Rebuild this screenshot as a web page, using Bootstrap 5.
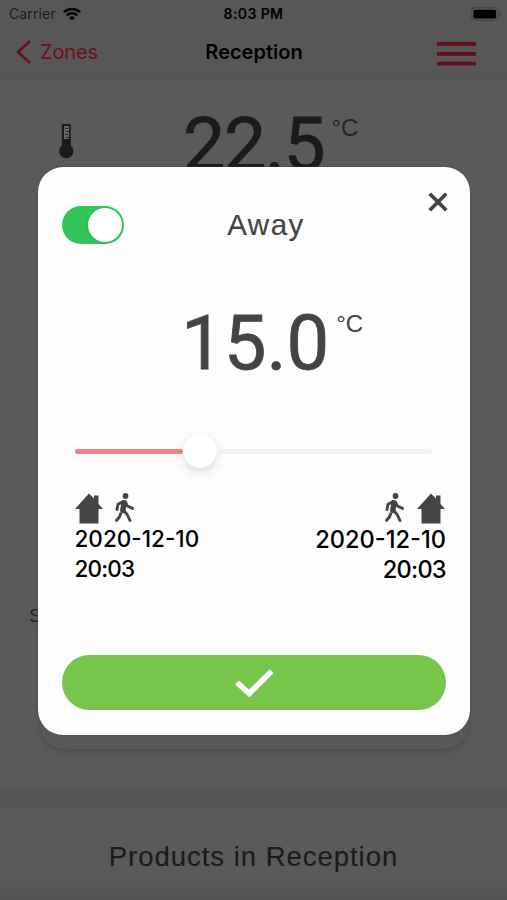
<!DOCTYPE html>
<html lang="en">
<head>
<meta charset="utf-8">
<meta name="viewport" content="width=device-width, initial-scale=1">
<title>Reception</title>
<link href="https://cdn.jsdelivr.net/npm/bootstrap@5.3.0/dist/css/bootstrap.min.css" rel="stylesheet">
<style>
body{background:#5a5a5a;font-family:Inter,"Liberation Sans",sans-serif;color:#000;height:900px;overflow:hidden}
svg{display:block;flex:none}
.screen{height:900px}
.topbar{height:79px;background:#575757;border-bottom:1px solid #4f4f4f}
.status{height:28px;padding:0 5px 0 9px;font-size:14px;line-height:28px}
.status>*,.titles>*{flex:1 1 0}
.carrier{color:#1b1b1b;letter-spacing:.1px;gap:7px}
.clock{font-weight:600;font-size:14px;letter-spacing:.4px;margin-left:-4px}
.titles{height:50px;padding:0 31px 2px 16px;font-size:20px}
.back{color:#6b0f1e;gap:9px;text-decoration:none;letter-spacing:-.15px}
.page-title{font-weight:600;font-size:20px;letter-spacing:0;position:relative;left:8px}
.uni{font-family:"Liberation Sans",Arial,sans-serif}
.reading{height:639px;padding:32px 0 0 58px}
.thermo{margin-top:13px}
.big{font-family:Roboto,"Liberation Sans",sans-serif;font-size:75px;line-height:63px;color:#1b1b1b;letter-spacing:-1.2px;-webkit-text-stroke:.8px currentColor}
.deg{font-size:24px;line-height:28px;color:#242424}
.past{margin:2px 0 0 109px}
.reading .deg{margin:3px 0 0 7px}
.tail{height:79px}
.band{height:20px;background:#565656;margin-top:70px}
.section-title{font-size:27.5px;color:#1b1b1b;letter-spacing:.97px;line-height:36px;padding-top:31px;-webkit-text-stroke:.15px currentColor}
.bottom-shade{position:absolute;left:0;right:0;bottom:0;height:24px;background:linear-gradient(#5a5a5a,#535353)}
.under-card{position:absolute;left:40px;top:600px;width:429px;height:149px;border-radius:25px;background:#585858;box-shadow:0 3px 4px #4e4e4e}
.hint{position:absolute;left:29px;top:604px;font-size:19px;line-height:24px;color:#242424}
.sheet{position:absolute;left:38px;top:167px;width:432px;height:568px;border-radius:25px;background:#fdfdfd;padding:0 24px;box-shadow:0 0 2px #444}
.head{height:96px;padding-top:21px}
.toggle{width:62px;height:38px;border-radius:19px;background:#32c55a;padding:2px;margin-top:18px}
.knob{width:34px;height:34px;border-radius:50%;background:#fff;box-shadow:-1px 1px 3px #0b913340}
.mode{font-size:29.5px;line-height:36px;color:#444;letter-spacing:1.5px;padding-top:19px;margin-right:19px;-webkit-text-stroke:.15px currentColor}
.x-btn{border:0;background:none;padding:3px 0 0;margin-right:-3px}
.value{padding:48px 0 0 119px}
.value .big{color:#444;font-size:76px;letter-spacing:0;margin:1px 0 -1px}
.value .deg{color:#444;margin:-1px 0 0 7px}
.slide{height:34px;margin:60px 14px 0 13px}
.bar{height:5px;border-radius:3px}
.done{width:108px;background:#f28089}
.thumb{width:34px;height:34px;border-radius:50%;background:#fff;box-shadow:0 4px 9px #0002,0 0 1px #0001}
.rest{flex:1;background:#f1f1f1}
.dates{height:119px;padding:25px 0 0 12.5px}
.when{font-size:22.5px;line-height:29.5px;font-weight:500}
.when.r{font-size:23.6px;line-height:30px}
.hour{letter-spacing:-.8px}
.r .hour{margin-right:.2px}
.marks{gap:11px}
.r .marks{gap:13px;margin-right:1px;margin-bottom:1px}
.ok{height:55px;border-radius:28px;background:#78c54b;border:0;margin-top:68px}
</style>
</head>
<body>
<svg width="0" height="0" class="position-absolute"><defs>
<symbol id="house" viewBox="0 0 28 30"><path fill="#444" d="M14 0 19 5V2H23.5V10.5L28 15.5H23.5V30H4.5V15.5H0Z"/></symbol>
<symbol id="walk" viewBox="0 0 20 30"><circle cx="11.5" cy="3" r="2.9" fill="#444"/><path d="M10 10 8.8 17.5" stroke="#444" stroke-width="5.4" stroke-linecap="round"/><path d="M9.5 8.4 4 11.2 3 16.5M11.5 9 13.4 13 18.5 15.4M9.5 17.5 13.2 21.5 16 27.5" fill="none" stroke="#444" stroke-width="2.9" stroke-linecap="round" stroke-linejoin="round"/><path d="M6.7 20.8 5.4 24 2.6 27.3" fill="none" stroke="#444" stroke-width="3" stroke-linecap="round"/></symbol>
</defs></svg>
<div class="screen position-relative">
  <header class="topbar">
    <div class="status d-flex align-items-center">
      <div class="carrier d-flex align-items-center"><span>Carrier</span>
        <svg width="18" height="14" viewBox="0 0 18 14" fill="none" stroke="#050505" stroke-width="2.5"><path d="M.8 5.2a11.8 11.8 0 0 1 16.4 0M3.8 8.3a7.4 7.4 0 0 1 10.4 0"/><path d="M9 13.6 6 10.6a4.3 4.3 0 0 1 6 0Z" fill="#050505" stroke="none"/></svg>
      </div>
      <div class="clock text-center">8:03 PM</div>
      <div class="d-flex justify-content-end"><svg width="31" height="14" viewBox="0 0 31 14"><rect x=".8" y=".7" width="26" height="12.6" rx="3.5" fill="none" stroke="#444" stroke-width="1.2"/><rect x="2.5" y="2.7" width="22.5" height="8.8" rx="1.5"/><path d="M28.5 5v4q3-2 0-4" fill="#3d3d3d"/></svg></div>
    </div>
    <div class="titles d-flex align-items-center">
      <a class="back d-flex align-items-center"><svg width="15" height="24" viewBox="0 0 15 24" fill="none" stroke="#6b0f1e" stroke-width="2.7"><path d="M14 1 2 12 14 23"/></svg><span>Zones</span></a>
      <div class="page-title text-center">Reception</div>
      <div class="d-flex justify-content-end"><svg class="mt-1" width="39" height="24" viewBox="0 0 39 24" fill="#650c1b"><path d="M0 0h39v3.8H0zM0 10h39v3.8H0zM0 19.8h39v3.8H0z"/></svg></div>
    </div>
  </header>
  <section class="reading d-flex align-items-start uni">
    <svg class="thermo" width="16" height="35" viewBox="0 0 16 35"><path d="M3.8 0h9v21.5a7.2 7.2 0 1 1-9 0Z" fill="#1b1b1b"/><path d="M6 2h5v13H6z" fill="#666"/><path d="M7 4.5h3M8 7.5h3M7 10.5h3M8 13.5h3" stroke="#292929"/></svg>
    <div class="big past">22.5</div><div class="deg">°C</div>
  </section>
  <section class="tail"><div class="band"></div><div class="section-title uni text-center position-relative" style="z-index:1">Products in Reception</div></section>
  <div class="bottom-shade"></div>
  <div class="under-card"></div>
  <div class="hint uni">S</div>
  <main class="sheet">
    <div class="head d-flex justify-content-between align-items-start">
      <div class="toggle d-flex justify-content-end align-items-center"><div class="knob"></div></div>
      <div class="mode uni">Away</div>
      <button class="x-btn" aria-label="Close"><svg width="22" height="22" viewBox="0 0 22 22" stroke="#444" stroke-width="3.7"><path d="M2.7 2.7 19.3 19.3M19.3 2.7 2.7 19.3"/></svg></button>
    </div>
    <div class="value d-flex align-items-start uni"><div class="big">15.0</div><div class="deg">°C</div></div>
    <div class="slide d-flex align-items-center"><div class="bar done"></div><div class="thumb"></div><div class="bar rest"></div></div>
    <div class="dates d-flex justify-content-between">
      <div class="when"><div class="marks d-flex"><svg width="28" height="31"><use href="#house"/></svg><svg width="20" height="30"><use href="#walk"/></svg></div>2020-12-10<br><span class="hour">20:03</span></div>
      <div class="when r text-end"><div class="marks d-flex justify-content-end"><svg width="20" height="30"><use href="#walk"/></svg><svg width="28" height="31"><use href="#house"/></svg></div>2020-12-10<br><span class="hour">20:03</span></div>
    </div>
    <button class="ok w-100 d-flex align-items-center justify-content-center" aria-label="Confirm"><svg width="39" height="28" viewBox="0 0 39 28" fill="none" stroke="#fff" stroke-width="5.6"><path d="M2 13.5 14.2 24.5 36.5 2.2"/></svg></button>
  </main>
</div>
<script src="https://cdn.jsdelivr.net/npm/bootstrap@5.3.0/dist/js/bootstrap.bundle.min.js"></script>
</body>
</html>
